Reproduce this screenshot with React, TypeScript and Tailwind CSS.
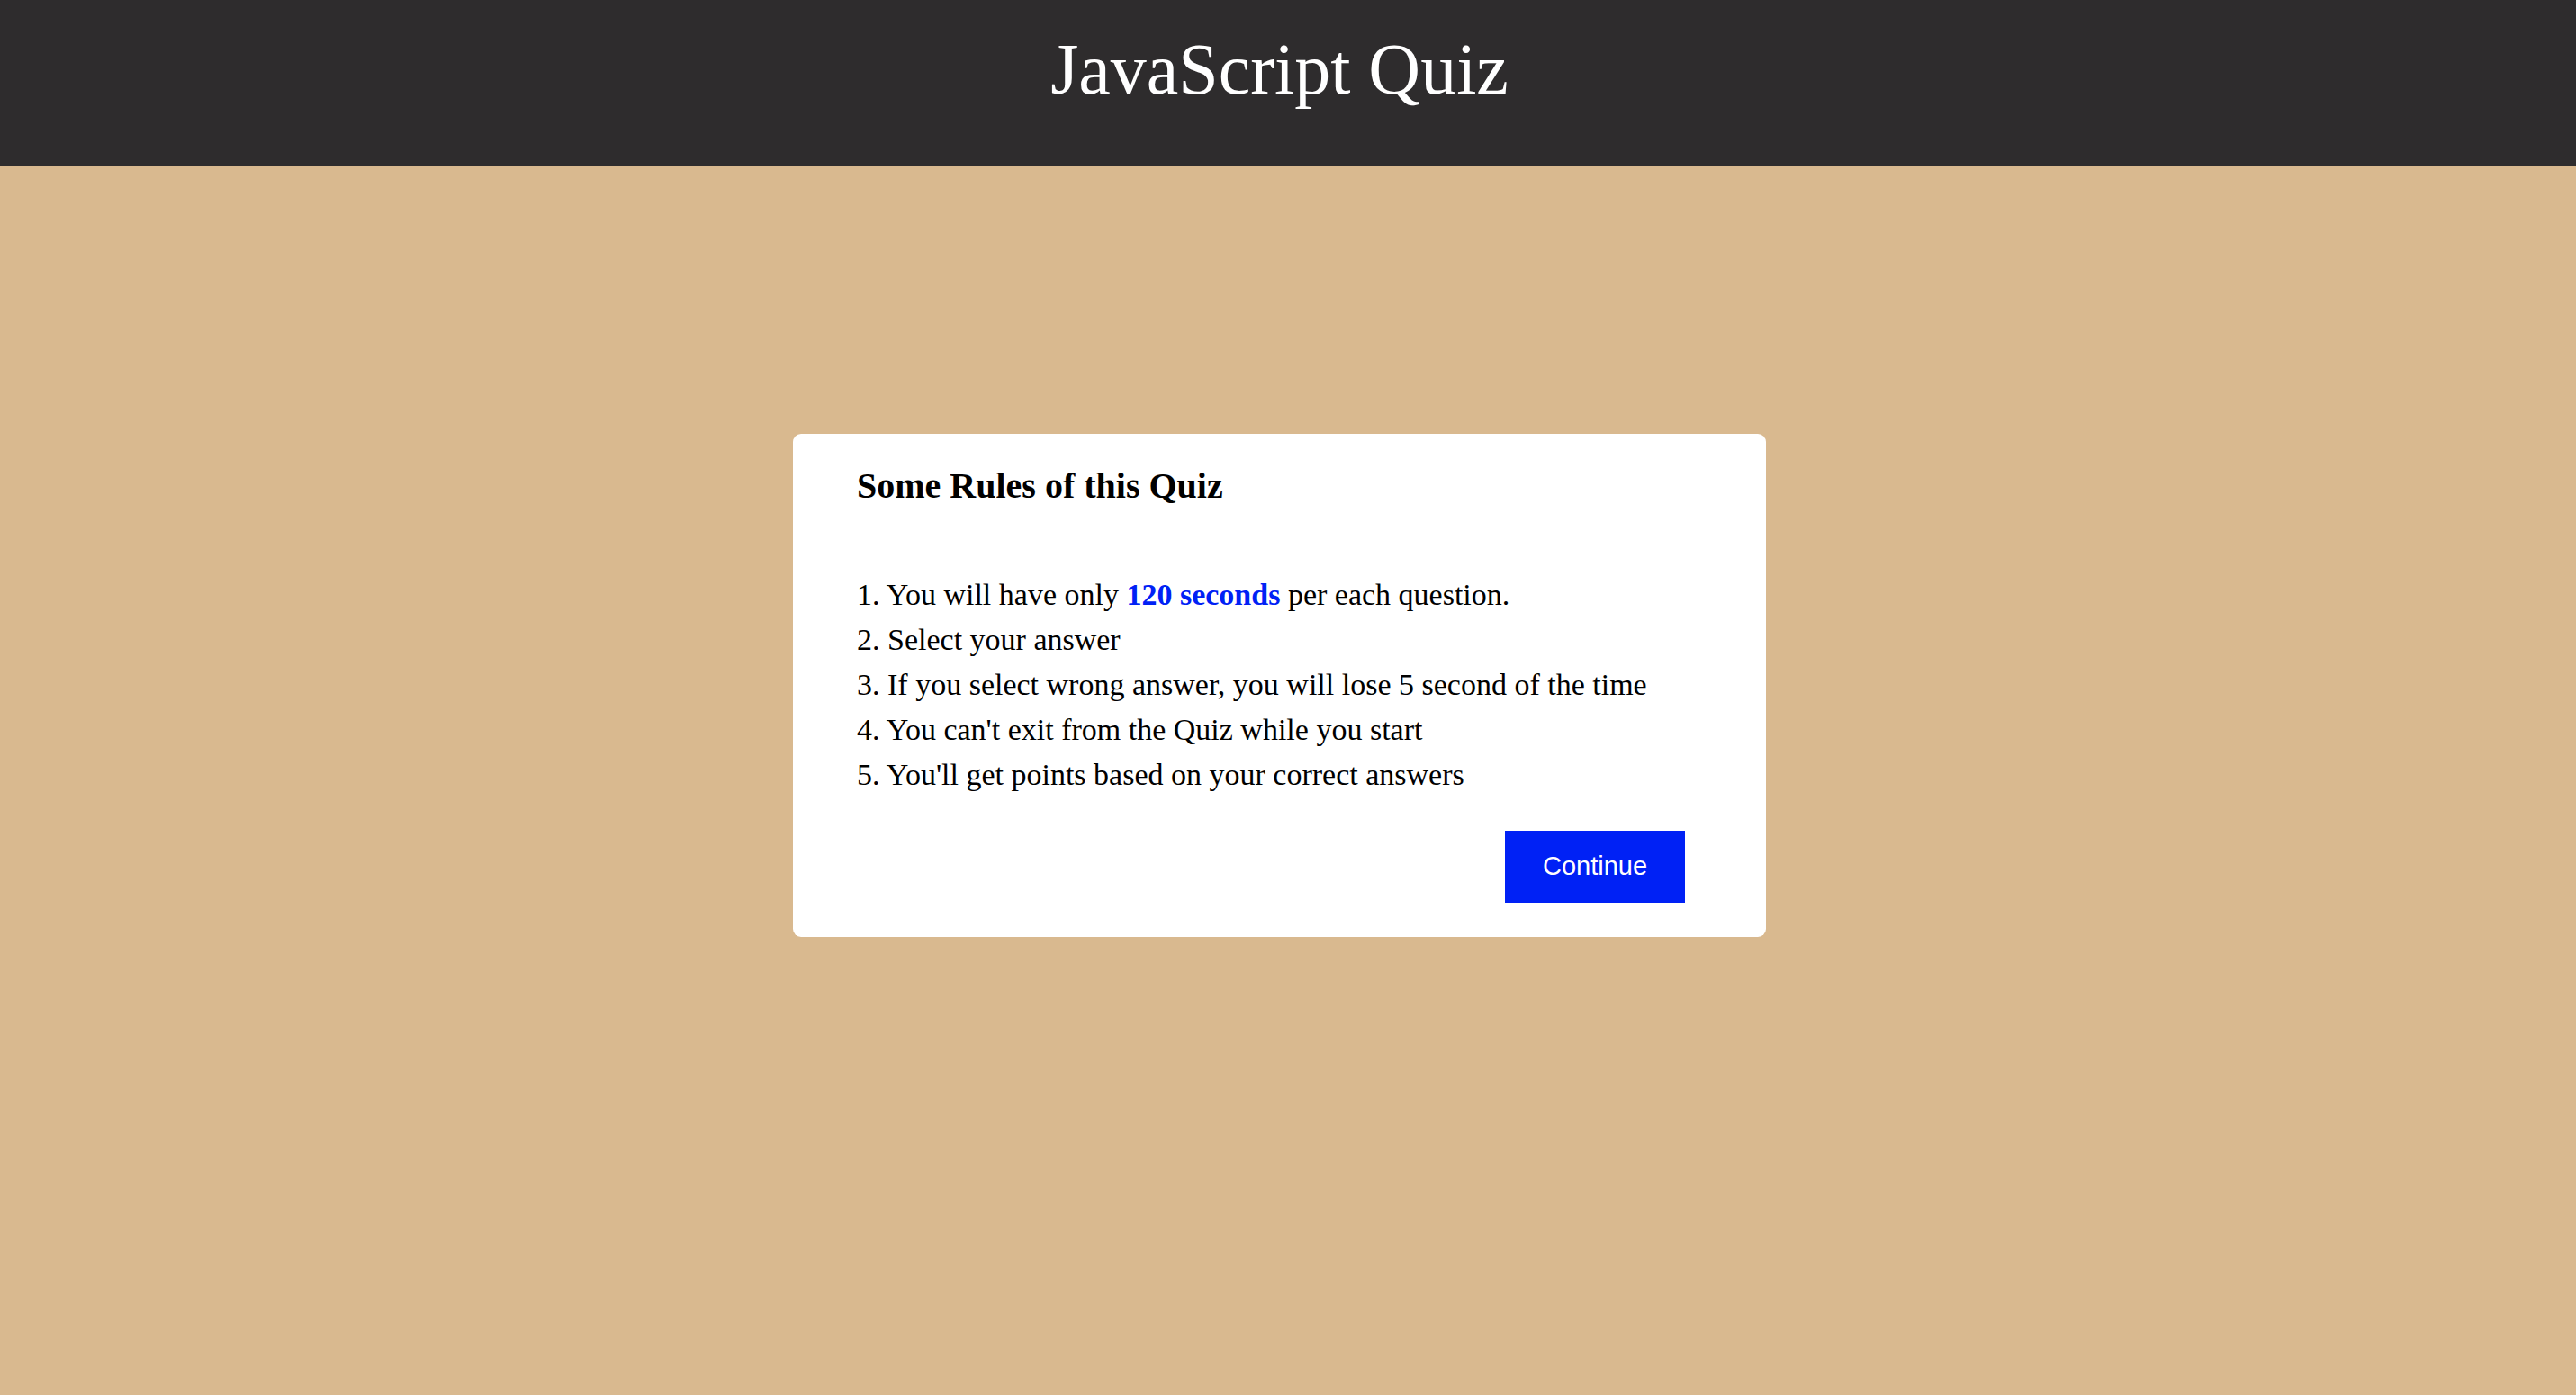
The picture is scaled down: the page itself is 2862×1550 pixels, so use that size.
import React from 'react'

const rules = [
  null,
  'Select your answer',
  'If you select wrong answer, you will lose 5 second of the time',
  "You can't exit from the Quiz while you start",
  "You'll get points based on your correct answers",
]

const App = () => {
  return (
    <div className="min-h-screen bg-[#d9b98f] font-['Liberation_Serif',serif] text-black">
      <header className="h-[184px] bg-[#2e2c2d] pt-[31px] pr-[19px] text-center">
        <h1 className="text-[80px] leading-[92px] font-normal text-white">JavaScript Quiz</h1>
      </header>

      <main className="flex justify-center pt-[298px] pr-[19px]">
        <div className="w-[1081px] rounded-[9px] bg-white pl-[71px] pr-[90px] pt-[35px] pb-[38px]">
          <h2 className="text-[40px] leading-[46px] font-bold">Some Rules of this Quiz</h2>

          <div className="mt-[73px] text-[34px] leading-[50px]">
            {rules.map((rule, i) => (
              <div key={i}>
                {i + 1}.{' '}
                {rule ?? (
                  <>
                    You will have only <span className="font-bold text-[#0021f5]">120 seconds</span> per each question.
                  </>
                )}
              </div>
            ))}
          </div>

          <div className="mt-[37px] flex justify-end">
            <button className="h-[80px] w-[200px] bg-[#0021f5] font-['Liberation_Sans',sans-serif] text-[29px] text-white">
              Continue
            </button>
          </div>
        </div>
      </main>
    </div>
  )
}

export default App
